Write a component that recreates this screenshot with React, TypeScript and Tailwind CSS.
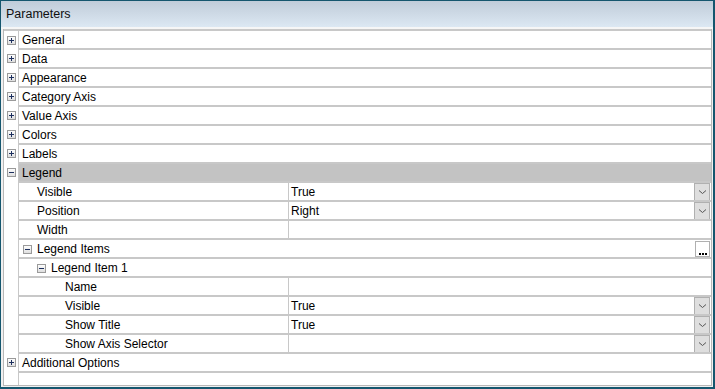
import React from "react";

function Box({ minus }: { minus?: boolean }) {
  return (
    <svg width="9" height="9" viewBox="0 0 9 9" className="block">
      <defs>
        <linearGradient id={minus ? "gm" : "gp"} x1="0" y1="0" x2="0" y2="1">
          <stop offset="0" stopColor="#ffffff" />
          <stop offset="1" stopColor="#dcdcdc" />
        </linearGradient>
      </defs>
      <rect x="0.5" y="0.5" width="8" height="8" fill={`url(#${minus ? "gm" : "gp"})`} stroke="#9a9a9a" />
      <rect x="2" y="4" width="5" height="1" fill="#1c2f5e" />
      {!minus && <rect x="4" y="2" width="1" height="5" fill="#1c2f5e" />}
    </svg>
  );
}

function DropBtn() {
  return (
    <div className="w-[16px] h-[18px] bg-[#dedede] border border-[#b0b0b0] flex items-center justify-center mr-[1px]">
      <svg width="9" height="6" viewBox="0 0 9 6">
        <path d="M1 1.5 L4.5 4.5 L8 1.5" fill="none" stroke="#555555" strokeWidth="1" />
      </svg>
    </div>
  );
}

function DotsBtn() {
  return (
    <div className="w-[15px] h-[16px] bg-white border border-[#b0b0b0] flex items-end justify-center mr-[1px] pb-[1px]">
      <div className="flex gap-[1px]">
        <div className="w-[2px] h-[2px] bg-black" />
        <div className="w-[2px] h-[2px] bg-black" />
        <div className="w-[2px] h-[2px] bg-black" />
      </div>
    </div>
  );
}

type Row =
  | { kind: "cat"; label: string; expanded?: boolean; gray?: boolean }
  | { kind: "prop"; label: string; indent: number; value?: string; drop?: boolean }
  | { kind: "sub"; label: string; iconX: number; textX: number; dots?: boolean };

const rows: Row[] = [
  { kind: "cat", label: "General" },
  { kind: "cat", label: "Data" },
  { kind: "cat", label: "Appearance" },
  { kind: "cat", label: "Category Axis" },
  { kind: "cat", label: "Value Axis" },
  { kind: "cat", label: "Colors" },
  { kind: "cat", label: "Labels" },
  { kind: "cat", label: "Legend", expanded: true, gray: true },
  { kind: "prop", label: "Visible", indent: 18, value: "True", drop: true },
  { kind: "prop", label: "Position", indent: 18, value: "Right", drop: true },
  { kind: "prop", label: "Width", indent: 18 },
  { kind: "sub", label: "Legend Items", iconX: 4, textX: 18, dots: true },
  { kind: "sub", label: "Legend Item 1", iconX: 18, textX: 32 },
  { kind: "prop", label: "Name", indent: 46 },
  { kind: "prop", label: "Visible", indent: 46, value: "True", drop: true },
  { kind: "prop", label: "Show Title", indent: 46, value: "True", drop: true },
  { kind: "prop", label: "Show Axis Selector", indent: 46, drop: true },
  { kind: "cat", label: "Additional Options" },
];

const line = "border-t-2 border-[#c8c8c8]";

export default function App() {
  return (
    <div
      className="w-[715px] h-[389px] border-l border-t border-r-2 border-b-2 border-[#15566e] bg-[#f0f0f0] flex flex-col text-[12px] text-[#000000] overflow-hidden"
      style={{ fontFamily: '"Liberation Sans", Arial, sans-serif' }}
    >
      <div className="h-[26px] shrink-0 bg-gradient-to-b from-[#c0ccd9] to-[#dce8f3] flex items-center pl-[5px] pt-[1px] text-[12.5px] text-[#101010]">
        Parameters
      </div>
      <div className="h-[2px] shrink-0 bg-[#f6f6f6]" />
      <div className="flex-1 ml-[2px] mr-[1px] border-l border-r border-b border-[#b8b8b8] bg-white flex flex-col">
        {rows.map((r, i) => {
          if (r.kind === "cat") {
            return (
              <div key={i} className="h-[19px] flex">
                <div className={`w-[15px] shrink-0 flex items-center justify-end pr-[2px] pt-[2px] border-r border-[#c8c8c8] ${i === 0 ? line : ""}`}>
                  <Box minus={r.expanded} />
                </div>
                <div
                  className={`flex-1 flex items-center pl-[3px] pt-[1px] ${line} ${
                    r.gray ? "bg-[#c3c3c3]" : "bg-white"
                  }`}
                >
                  {r.label}
                </div>
              </div>
            );
          }
          if (r.kind === "sub") {
            return (
              <div key={i} className="h-[19px] flex">
                <div className="w-[15px] shrink-0 border-r border-[#c8c8c8]" />
                <div className={`flex-1 flex items-center pt-[1px] ${line} relative`}>
                  <div className="absolute top-[5px]" style={{ left: r.iconX }}>
                    <Box minus />
                  </div>
                  <div style={{ paddingLeft: r.textX }}>{r.label}</div>
                  <div className="flex-1" />
                  {r.dots && <DotsBtn />}
                </div>
              </div>
            );
          }
          return (
            <div key={i} className="h-[19px] flex">
              <div className="w-[15px] shrink-0 border-r border-[#c8c8c8]" />
              <div
                className={`w-[270px] shrink-0 flex items-center pt-[1px] border-r ${line}`}
                style={{ paddingLeft: r.indent }}
              >
                {r.label}
              </div>
              <div className={`flex-1 flex items-center ${line} pl-[2px]`}>
                <div className="flex-1 pt-[1px]">{r.value ?? ""}</div>
                {r.drop && <DropBtn />}
              </div>
            </div>
          );
        })}
        <div className="flex-1 flex">
          <div className="w-[15px] shrink-0 border-r border-[#c8c8c8]" />
          <div className={`flex-1 ${line}`} />
        </div>
      </div>
      <div className="h-[1px] shrink-0" />
    </div>
  );
}
